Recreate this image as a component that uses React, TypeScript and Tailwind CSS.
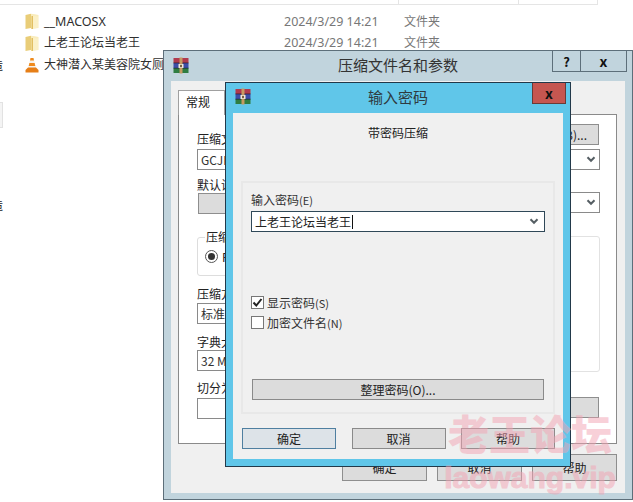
import React from "react";

const font = { fontFamily: '"Noto Sans CJK SC","Liberation Sans",sans-serif' };

function RarIcon() {
  return (
    <svg width="16" height="17" viewBox="0 0 16 17" className="shrink-0">
      <rect x="0.5" y="1" width="15" height="5" fill="#b03a4e" />
      <rect x="0.5" y="6" width="15" height="5" fill="#3d4da8" />
      <rect x="0.5" y="11" width="15" height="5" fill="#2f7d42" />
      <rect x="0.5" y="5.6" width="15" height="0.7" fill="#2a2030" />
      <rect x="0.5" y="10.8" width="15" height="0.7" fill="#1c2430" />
      <rect x="6.5" y="0.5" width="3" height="16" fill="#c79a62" />
      <rect x="5.5" y="7" width="5" height="4" fill="#efe6d4" />
      <rect x="7.2" y="7.8" width="1.6" height="2.4" fill="#5a4020" />
    </svg>
  );
}

function Folder() {
  return (
    <svg width="14" height="17" viewBox="0 0 14 17" className="shrink-0">
      <path d="M0.5 2 L6 0.8 L6 15 L0.5 16 Z" fill="#e9cd78" />
      <path d="M6 0.8 Q10 1 13.5 2 L13.5 15 L6 16 Z" fill="#f9ecbc" />
      <path d="M6.5 3 L8 3 L8 16 L6.5 16 Z" fill="#e2bf62" />
      <path d="M8 3 L13 3.5 L13 14.8 L8 15.6 Z" fill="#fbf0c6" />
    </svg>
  );
}

function Cone() {
  return (
    <svg width="14" height="16" viewBox="0 0 14 16" className="shrink-0">
      <path d="M5.5 1 H8.5 L11 11 H3 Z" fill="#f6f2ea" />
      <path d="M5.5 1 H8.5 L9 3.5 H5 Z" fill="#ef8a1c" />
      <path d="M4.4 6 H9.6 L10.3 9 H3.7 Z" fill="#ef8a1c" />
      <path d="M3 10.5 H11 L13.5 13 V15.5 H0.5 V13 Z" fill="#e67f18" />
    </svg>
  );
}

function Chevron() {
  return (
    <svg width="10" height="7" viewBox="0 0 10 7">
      <path d="M1.5 1.2 L5 4.8 L8.5 1.2" fill="none" stroke="#555e63" strokeWidth="2" />
    </svg>
  );
}

function FileRow({ icon, name, date, type }: { icon: React.ReactNode; name: React.ReactNode; date?: string; type?: string }) {
  return (
    <div className="flex h-[21.5px] items-center font-['Noto_Sans','Noto_Sans_CJK_SC',sans-serif] text-[12px] leading-none">
      <div className="flex w-[19px] justify-start">{icon}</div>
      <div className="w-[240px] whitespace-nowrap text-[#2f2f2f]">{name}</div>
      <div className="w-[120px] text-[12.5px] text-[#777777]">{date}</div>
      <div className="text-[#777777]">{type}</div>
    </div>
  );
}

function BackBtn({ label, className = "" }: { label: string; className?: string }) {
  return (
    <div className={`flex items-center justify-center border border-[#8e8e8e] bg-[#dcdcdc] text-[12px] leading-none text-[#222] ${className}`}>
      {label}
    </div>
  );
}

function Field({ text, className = "", chevron = false }: { text?: string; className?: string; chevron?: boolean }) {
  return (
    <div className={`flex h-[21px] items-center justify-between border border-[#8a8a8a] bg-white px-[3px] text-[12px] leading-none text-[#333] ${className}`}>
      <span>{text}</span>
      {chevron && <Chevron />}
    </div>
  );
}

function BackWindow() {
  return (
    <div className="absolute left-[163px] top-[50px] flex h-[450px] w-[470px] flex-col border border-[#5d6f7a] bg-[#c1d4dd]">
      <div className="grid h-[30px] shrink-0 grid-cols-[1fr_auto_1fr] items-start">
        <div className="pl-[9px] pt-[6px]">
          <RarIcon />
        </div>
        <div className="pt-[4px] text-[15px] leading-[20px] text-[#333]">压缩文件名和参数</div>
        <div className="flex justify-end pr-[5px]">
          <div className="flex h-[21px] w-[29px] items-center justify-center border border-t-0 border-[#5d6f7a] text-[13px] font-bold leading-none text-[#111]">?</div>
          <div className="flex h-[21px] w-[46px] items-center justify-center border border-l-0 border-t-0 border-[#5d6f7a] text-[14px] font-bold leading-none text-[#111]">x</div>
        </div>
      </div>
      <div className="mx-[7px] mb-[6px] flex min-h-0 flex-1 flex-col bg-[#f0f0f0] pl-[7px] pr-[8px] pt-[9px]">
        <div className="z-10 -mb-px flex h-[25px] w-[47px] items-center border border-b-0 border-[#a0a0a0] bg-white pb-[2px] pl-[7px] text-[12px] leading-none text-[#222]">
          常规
        </div>
        <div className="flex h-[330px] justify-between border border-[#8a8a8a] bg-white pl-[18px] pr-[16px]">
          <div className="flex w-[190px] flex-col text-[12px] leading-none text-[#222]">
            <div className="pt-[18px]">压缩文件名(A)</div>
            <Field text="GCJK.rar" className="mt-[4px]" />
            <div className="mt-[9px]">默认设置</div>
            <div className="ml-px mt-[2px] h-[21px] border border-[#8e8e8e] bg-[#dcdcdc]" />
            <div className="relative mt-[23px] h-[39px] rounded-[3px] border border-[#dddddd]">
              <span className="absolute -top-[7px] left-[7px] bg-white px-px">压缩文件格式</span>
              <div className="flex items-center gap-[4px] pl-[7px] pt-[12px]">
                <span className="flex h-[13px] w-[13px] items-center justify-center rounded-full border border-[#555] bg-white">
                  <span className="h-[7px] w-[7px] rounded-full bg-[#333]" />
                </span>
                <span>RAR</span>
              </div>
            </div>
            <div className="mt-[12px]">压缩方式</div>
            <Field text="标准" className="mt-[3px]" />
            <div className="mt-[12px]">字典大小</div>
            <Field text="32 MB" className="mt-[2px]" />
            <div className="mt-[11px]">切分为分卷</div>
            <Field className="mt-[4px]" />
          </div>
          <div className="flex w-[200px] flex-col">
            <BackBtn label="浏览(B)..." className="mr-px mt-[9px] h-[21px] w-[74px] self-end" />
            <Field chevron className="mt-[4px]" />
            <Field chevron className="mt-[22px]" />
            <div className="mt-[23px] h-[136px] rounded-[3px] border border-[#e2e2e2]" />
            <div className="mr-px mt-[25px] h-[21px] border border-[#8e8e8e] bg-[#dcdcdc]" />
          </div>
        </div>
        <div className="mt-[10px] flex justify-end gap-[10px]">
          <BackBtn label="确定" className="h-[27px] w-[85px]" />
          <BackBtn label="取消" className="h-[27px] w-[85px]" />
          <BackBtn label="帮助" className="h-[27px] w-[85px]" />
        </div>
      </div>
    </div>
  );
}

function FrontBtn({ label, className = "" }: { label: string; className?: string }) {
  return (
    <div className={`flex h-[21px] items-center justify-center border text-[12px] leading-none text-[#222] ${className}`}>
      {label}
    </div>
  );
}

function FrontWindow() {
  return (
    <div className="absolute left-[225px] top-[82px] flex h-[385px] w-[346px] flex-col border border-[#22394a] bg-[#60c6e9]">
      <div className="grid h-[30px] shrink-0 grid-cols-[1fr_auto_1fr] items-start">
        <div className="pl-[9px] pt-[5px]">
          <RarIcon />
        </div>
        <div className="pt-[4px] text-[15px] leading-[20px] text-[#2f3a40]">输入密码</div>
        <div className="flex justify-end pr-[4px]">
          <div className="flex h-[21px] w-[34px] items-center justify-center border border-t-0 border-[#6b3a36] bg-[#c65650] text-[14px] font-bold leading-none text-[#111]">x</div>
        </div>
      </div>
      <div className="mx-[7px] mb-[7px] flex min-h-0 flex-1 flex-col bg-[#f0f0f0] px-[8px]">
        <div className="pt-[13px] text-center text-[12px] leading-[14px] text-[#222]">带密码压缩</div>
        <div className="mt-[41px] flex h-[233px] flex-col border-2 border-[#e8e8e8] pl-[8px] pr-[8px] text-[12px] leading-none text-[#333]">
          <div className="pt-[11px]">
            输入密码<span className="text-[11px]">(E)</span>
          </div>
          <div className="mt-[5px] flex h-[21px] items-center justify-between border border-[#2f4858] bg-white pl-[3px] pr-[5px] text-[#222]">
            <span className="flex items-center">
              上老王论坛当老王<span className="ml-px h-[14px] w-px bg-[#111]" />
            </span>
            <Chevron />
          </div>
          <div className="mt-[64px] flex items-center gap-[3px]">
            <span className="flex h-[13px] w-[13px] items-center justify-center border border-[#777] bg-white">
              <svg width="11" height="11" viewBox="0 0 11 11">
                <path d="M1.5 5.5 L4.3 8.5 L9.5 2" fill="none" stroke="#222" strokeWidth="2" />
              </svg>
            </span>
            <span>
              显示密码<span className="text-[11px]">(S)</span>
            </span>
          </div>
          <div className="mt-[7px] flex items-center gap-[3px]">
            <span className="h-[13px] w-[13px] border border-[#777] bg-white" />
            <span>
              加密文件名<span className="text-[11px]">(N)</span>
            </span>
          </div>
          <FrontBtn label="整理密码(O)..." className="ml-px mr-px mt-[50px] border-[#8a8a8a] bg-[#dcdcdc]" />
        </div>
        <div className="ml-px mt-[14px] flex justify-between">
          <FrontBtn label="确定" className="w-[94px] border-[#4f7fa0] bg-[#dde3e8]" />
          <FrontBtn label="取消" className="w-[94px] border-[#8a8a8a] bg-[#dcdcdc]" />
          <FrontBtn label="帮助" className="w-[94px] border-[#8a8a8a] bg-[#dcdcdc]" />
        </div>
      </div>
    </div>
  );
}

export default function App() {
  return (
    <div className="relative h-[502px] w-[633px] overflow-hidden bg-white" style={font}>
      <div className="flex h-[5px] w-[598px] border-b border-[#e5e5e5]">
        <div className="w-[399px] border-r border-[#e5e5e5]" />
        <div className="w-[120px] border-r border-[#e5e5e5]" />
        <div className="w-[79px] border-r border-[#e5e5e5]" />
      </div>
      <div className="pl-[25px] pt-[6px]">
        <FileRow icon={<Folder />} name={<span className="text-[12.5px]">__MACOSX</span>} date="2024/3/29 14:21" type="文件夹" />
        <FileRow icon={<Folder />} name="上老王论坛当老王" date="2024/3/29 14:21" type="文件夹" />
        <FileRow icon={<Cone />} name="大神潜入某美容院女厕偷拍" />
      </div>
      <div className="absolute -left-[9px] top-[58px] text-[12px] leading-[14px] text-[#222]">造</div>
      <div className="absolute left-0 top-[102px] h-[26px] w-[3px] border-y border-r border-[#e2e2e2] bg-[#f4f4f4]" />
      <div className="absolute -left-[9px] top-[198px] text-[12px] leading-[14px] text-[#222]">造</div>
      <BackWindow />
      <FrontWindow />
      <div className="pointer-events-none absolute left-[445px] top-[405px] flex w-[170px] flex-col items-center text-[#f3a3b3] opacity-50">
        <div className="whitespace-nowrap text-[41px] font-black leading-[54px]">老王论坛</div>
        <div className="mt-[1px] whitespace-nowrap font-['Liberation_Sans',sans-serif] text-[30px] font-bold leading-[36px] [-webkit-text-stroke:1px_#f3a3b3]">
          laowang.vip
        </div>
      </div>
    </div>
  );
}
